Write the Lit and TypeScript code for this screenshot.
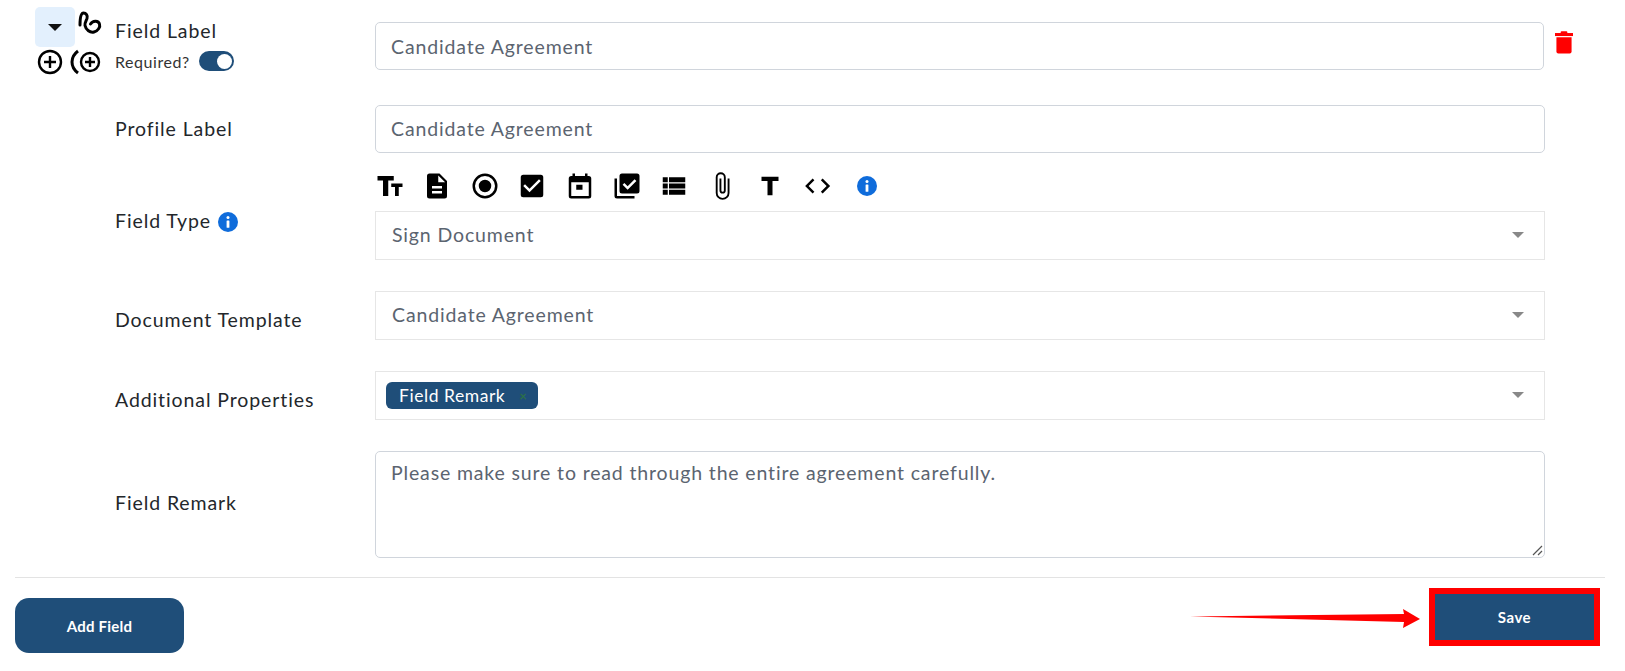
import { LitElement, html, css, svg } from "lit";
import { customElement } from "lit/decorators.js";

const ICONS = [
  "M2 4h13v3.600h-4.400V20H6.400V7.600H2zM13 10h9v2.800h-3V20h-3v-7.200h-3z",
  "M14 2H6a2 2 0 0 0-2 2v16a2 2 0 0 0 2 2h12a2 2 0 0 0 2-2V8zm2 16H8v-2h8zm0-4H8v-2h8zm-3-5V3.500L18.500 9z",
  "M12 7a5 5 0 1 0 0 10 5 5 0 0 0 0-10zm0-5a10 10 0 1 0 0 20 10 10 0 0 0 0-20zm0 18a8 8 0 1 1 0-16 8 8 0 0 1 0 16z",
  "M19 3H5a2 2 0 0 0-2 2v14a2 2 0 0 0 2 2h14a2 2 0 0 0 2-2V5a2 2 0 0 0-2-2zm-9 14-5-5 1.400-1.400 3.600 3.600 7.600-7.600L19 8z",
  "M19 4h-1V2h-2v2H8V2H6v2H5a2 2 0 0 0-2 2v14a2 2 0 0 0 2 2h14a2 2 0 0 0 2-2V6a2 2 0 0 0-2-2zm0 16H5V9h14zM9 11h5v4H9z",
  "M4 6H2v14a2 2 0 0 0 2 2h14v-2H4zm16-4H8a2 2 0 0 0-2 2v12a2 2 0 0 0 2 2h12a2 2 0 0 0 2-2V4a2 2 0 0 0-2-2zm-7.500 13-4-4 1.400-1.400 2.600 2.600 5.600-5.600L19.500 8z",
  "M3 14h4v-4H3zm0 5h4v-4H3zM3 9h4V5H3zm5 5h13v-4H8zm0 5h13v-4H8zM8 5v4h13V5z",
  "M16.500 6v11.500a4 4 0 0 1-8 0V5a2.500 2.500 0 0 1 5 0v10.500a1 1 0 0 1-2 0V6H10v9.500a2.500 2.500 0 0 0 5 0V5a4 4 0 0 0-8 0v12.500a5.500 5.500 0 0 0 11 0V6z",
  "M6 4.600v3.400h4.800V19.400h4V8h4.800V4.600z",
  "M9.900 16.600 5.300 12l4.600-4.600L8.500 6l-6 6 6 6zm5.200 0 4.600-4.600-4.600-4.600L16.500 6l6 6-6 6z",
];

const infoIcon = html`<svg width="20" height="20" viewBox="0 0 20 20"><circle cx="10" cy="10" r="10" fill="#0f6cdb"/><circle cx="10" cy="5.600" r="1.500" fill="#fff"/><rect x="8.600" y="8.400" width="2.800" height="7.400" rx=".6" fill="#fff"/></svg>`;

const caret = html`<svg width="12" height="6" viewBox="0 0 12 6"><path d="M0 0h12L6 6z" fill="#888"/></svg>`;

@customElement("app-root")
export class AppRoot extends LitElement {
  static styles = css`
    :host {
      display: block;
      width: 1625px;
      height: 671px;
      overflow: hidden;
      background: #fff;
      font-family: "Lato", "Noto Sans", sans-serif;
      color: #23272b;
    }
    svg { display: block; flex: none; }
    .form {
      display: grid;
      grid-template-columns: 375px 1170px 1fr;
    }
    .form-top { padding-top: 7px; }
    .first { height: 98px; }
    .head { display: flex; padding-left: 35px; }
    .handles { width: 80px; flex: none; }
    .handle-top { display: flex; align-items: flex-start; gap: 2px; }
    .squiggle { margin-top: 3px; }
    .toggle-btn {
      width: 40px;
      height: 40px;
      border-radius: 5px;
      background: #e3f0fd;
      display: flex;
      align-items: center;
      justify-content: center;
    }
    .handle-bottom { display: flex; align-items: center; gap: 6px; padding-left: 2px; margin-top: 2px; }
    .label { font-size: 19.500px; letter-spacing: 0.9px; white-space: nowrap; padding-bottom: 2px; }
    .head-label { padding-top: 12px; }
    .required {
      display: flex;
      align-items: center;
      gap: 9px;
      font-size: 16px;
      margin-top: 7px;
      letter-spacing: 0.55px;
      color: #333;
    }
    .switch {
      width: 35px;
      height: 20px;
      border-radius: 10px;
      background: #1f4e79;
      display: flex;
      align-items: center;
      justify-content: flex-end;
      padding-right: 2px;
      box-sizing: border-box;
    }
    .knob { width: 15px; height: 15px; border-radius: 50%; background: #fff; }
    .field-text { font-size: 19.500px; letter-spacing: 0.85px; color: #5b6470; }
    .input {
      height: 48px;
      box-sizing: border-box;
      border: 1px solid #d0d5dc;
      border-radius: 5px;
      padding: 0 15px;
      display: flex;
      align-items: center;
    }
    .input-first { margin-top: 15px; margin-right: 1px; }
    .input-profile { padding-bottom: 2px; }
    .trash { padding: 24px 0 0 10px; }
    .row-label { padding-left: 115px; display: flex; align-items: center; gap: 7px; }
    .row-profile { height: 48px; }
    .row-type { padding-top: 44px; height: 49px; }
    .row-plain { margin-top: 31px; padding-top: 10px; height: 39px; }
    .row-remark { margin-top: 31px; height: 105px; }
    .icons { display: flex; align-items: center; height: 34px; margin: 16px 0 8px; }
    .tool { width: 47.400px; flex: none; }
    .tool-info { margin-left: 8px; }
    .select {
      height: 49px;
      box-sizing: border-box;
      border: 1px solid #e6e6e6;
      padding: 0 20px 2px 16px;
      display: flex;
      align-items: center;
      justify-content: space-between;
    }
    .spaced { margin-top: 31px; }
    .select-tag { padding-left: 10px; }
    .tag {
      display: inline-flex;
      align-items: center;
      height: 27px;
      margin-top: 2px;
      box-sizing: border-box;
      background: #1f4e79;
      color: #fff;
      border-radius: 6px;
      padding: 0 11px 0 13px;
      font-size: 17.500px;
      letter-spacing: 0.55px;
      gap: 14px;
    }
    .tag-x { color: #2c6e49; font-size: 13px; font-weight: 700; }
    .textarea {
      height: 107px;
      box-sizing: border-box;
      border: 1px solid #d0d5dc;
      border-radius: 5px;
      padding: 9px 15px;
      position: relative;
    }
    .grip { position: absolute; right: 1px; bottom: 1px; }
    .footer {
      margin: 19px 20px 0 15px;
      border-top: 1px solid #e3e3e3;
      padding-top: 10px;
      display: flex;
      justify-content: space-between;
      align-items: flex-start;
    }
    .add {
      margin-top: 10px;
      width: 169px;
      height: 55px;
      border-radius: 14px;
      background: #1f4e79;
      color: #fff;
      font-size: 15px;
      letter-spacing: 0.2px;
      font-weight: 700;
      display: flex;
      align-items: center;
      justify-content: center;
    }
    .save-group { display: flex; align-items: center; gap: 9px; margin-right: 5px; }
    .arrow { margin-top: 4px; }
    .save {
      width: 171px;
      height: 58px;
      box-sizing: border-box;
      border: 6px solid #f00;
      background: #1f4e79;
      color: #fff;
      font-size: 15px;
      letter-spacing: 0.5px;
      font-weight: 700;
      display: flex;
      align-items: center;
      justify-content: center;
    }
  `;

  render() {
    return html`
      <div class="form form-top">
        <div class="head first">
          <div class="handles">
            <div class="handle-top">
              <div class="toggle-btn">
                <svg width="14" height="7" viewBox="0 0 14 7"><path d="M0 0h14L7 7z" fill="#111"/></svg>
              </div>
              <svg class="squiggle" width="25" height="25" viewBox="0 0 25 25" fill="none" stroke="#000" stroke-width="3" stroke-linecap="round" stroke-linejoin="round">
                <path d="M3 15C3 8 4 3 6.500 3C9 3 11 5.500 10 8.500C9 11 7.500 13 8 15.500C9 20 13 23 17 22C21 21 23.500 17 22.500 14C21.500 10.500 16 10 13.500 14"/>
              </svg>
            </div>
            <div class="handle-bottom">
              <svg width="26" height="26" viewBox="0 0 26 26" fill="none" stroke="#000" stroke-width="2.400"><circle cx="13" cy="13" r="11"/><path d="M13 7v12M7 13h12"/></svg>
              <svg width="32" height="26" viewBox="0 0 32 26" fill="none" stroke="#000" stroke-width="2.400"><path stroke-width="3" d="M9 2C1 8 1 18 9 24"/><circle cx="21" cy="13" r="9"/><path d="M21 8v10M16 13h10"/></svg>
            </div>
          </div>
          <div class="head-label">
            <div class="label">Field Label</div>
            <div class="required">Required?
              <div class="switch"><div class="knob"></div></div>
            </div>
          </div>
        </div>
        <div class="input input-first field-text">Candidate Agreement</div>
        <div class="trash">
          <svg width="18" height="23" viewBox="0 0 19 24" fill="#f00"><rect x="6" y="0" width="7" height="3" rx="1"/><rect x="0" y="2" width="19" height="3.200"/><path d="M1.500 6.500h16V21.500a2 2 0 0 1-2 2h-12a2 2 0 0 1-2-2z"/></svg>
        </div>

        <div class="row-label row-profile"><span class="label">Profile Label</span></div>
        <div class="input input-profile field-text">Candidate Agreement</div>
        <div></div>

        <div class="row-label row-type"><span class="label">Field Type</span>${infoIcon}</div>
        <div>
          <div class="icons">
            ${ICONS.map((d) => html`<div class="tool">${svg`<svg width="30" height="30" viewBox="0 0 24 24"><path d=${d} fill="#000"/></svg>`}</div>`)}
            <div class="tool tool-info">${infoIcon}</div>
          </div>
          <div class="select field-text">Sign Document ${caret}</div>
        </div>
        <div></div>

        <div class="row-label row-plain"><span class="label">Document Template</span></div>
        <div class="select spaced field-text">Candidate Agreement ${caret}</div>
        <div></div>

        <div class="row-label row-plain"><span class="label">Additional Properties</span></div>
        <div class="select spaced select-tag">
          <span class="tag">Field Remark <span class="tag-x">×</span></span> ${caret}
        </div>
        <div></div>

        <div class="row-label row-remark"><span class="label">Field Remark</span></div>
        <div class="textarea spaced field-text">Please make sure to read through the entire agreement carefully.
          <svg class="grip" width="12" height="12" viewBox="0 0 12 12" stroke="#555" stroke-width="1.200"><path d="M2 11 11 2M7 11l4-4"/></svg>
        </div>
        <div></div>
      </div>

      <div class="footer">
        <div class="add">Add Field</div>
        <div class="save-group">
          <svg class="arrow" width="230" height="20" viewBox="0 0 230 20"><path d="M0 7.500 214 5 213 0 230 10 213 19 214 13Z" fill="#f00"/></svg>
          <div class="save">Save</div>
        </div>
      </div>
    `;
  }
}
